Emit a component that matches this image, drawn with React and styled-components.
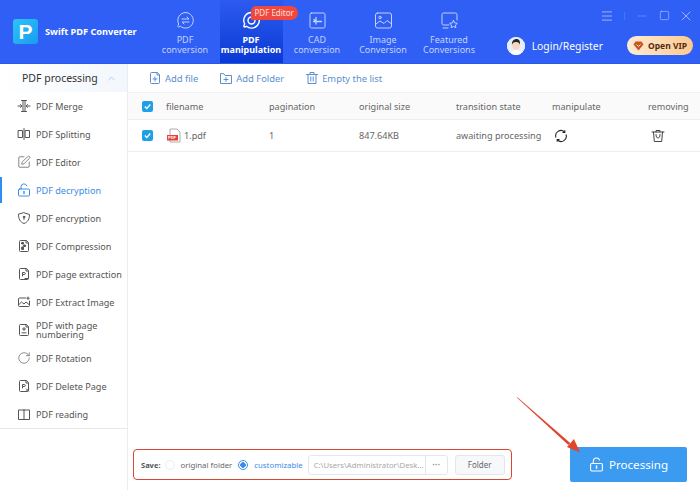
import styled, { createGlobalStyle } from "styled-components";
import { ChevronUp, SquarePen, RotateCw, Menu, Minus, Square, X } from "lucide-react";

const Global = createGlobalStyle`
  html, body { margin: 0; padding: 0; background: #fff; }
  body { font-family: "Noto Sans", "Noto Sans CJK SC", sans-serif; }
`;

const Page = styled.div`
  width: 700px;
  height: 490px;
  position: relative;
  overflow: hidden;
  display: flex;
  flex-direction: column;
  background: #fff;
`;

/* header */
const Header = styled.header`
  height: 63px;
  flex: none;
  display: flex;
  background: #2f5ff5;
  color: #fff;
  border-bottom: 1px solid #2a58e8;
  box-sizing: content-box;
`;
const Brand = styled.div`
  width: 151px;
  flex: none;
  display: flex;
  align-items: center;
  padding-left: 13px;
  box-sizing: border-box;
  gap: 7px;
  font-size: 9.2px;
  font-weight: 700;
  white-space: nowrap;
`;
const LogoBox = styled.div`
  width: 25px;
  height: 25px;
  border-radius: 3px;
  background: linear-gradient(135deg, #2cc4f5, #1a9cf0);
  display: flex;
  align-items: center;
  justify-content: center;
  font-family: "Liberation Sans", sans-serif;
  font-size: 21px;
  font-weight: 700;
  color: #fff;
`;
const Nav = styled.nav`
  display: flex;
  padding-left: 1px;
`;
const NavItem = styled.div`
  width: ${(p) => (p.$active ? "63px" : "66px")};
  margin: ${(p) => (p.$active ? "0 1.5px" : "0")};
  height: 63px;
  position: relative;
  display: flex;
  flex-direction: column;
  align-items: center;
  padding-top: 11px;
  box-sizing: border-box;
  color: ${(p) => (p.$active ? "#fff" : "#c4d3fd")};
  font-weight: ${(p) => (p.$active ? 700 : 400)};
  background: ${(p) => (p.$active ? "linear-gradient(#2d5bf0, #0a3ad4)" : "none")};
  font-size: 9px;
  line-height: 10px;
  text-align: center;
  white-space: nowrap;
  svg { flex: none; margin-bottom: 5px; }
`;
const Badge = styled.span`
  position: absolute;
  top: 6px;
  left: 31px;
  height: 14px;
  padding: 0 4px;
  border-radius: 5px 7px 7px 0;
  background: #f0473f;
  color: #ffe3dc;
  font-size: 8px;
  font-weight: 400;
  line-height: 14px;
  white-space: nowrap;
`;
const HeaderRight = styled.div`
  flex: 1;
  display: flex;
  flex-direction: column;
  align-items: flex-end;
  padding: 10px 3px 0 0;
`;
const WindowBar = styled.div`
  height: 11px;
  display: flex;
  align-items: center;
  color: #d6e0fd;
`;
const WinBtn = styled.span`
  width: 22px;
  height: 11px;
  display: flex;
  align-items: center;
  justify-content: center;
  color: ${(p) => (p.$dim ? "#8aa6f7" : "inherit")};
`;
const Sep = styled.i`
  width: 1px;
  height: 8px;
  margin: 0 6px;
  background: #4a74f2;
`;
const UserRow = styled.div`
  display: flex;
  align-items: center;
  margin: 15px 4px 0 0;
  gap: 7px;
`;
const Avatar = styled.div`
  width: 18px;
  height: 18px;
  border-radius: 50%;
  overflow: hidden;
  background: #e6f0fb;
`;
const Login = styled.span`
  font-size: 10.4px;
  margin-right: 17px;
  white-space: nowrap;
`;
const Vip = styled.div`
  width: 66px;
  height: 19px;
  border-radius: 10px;
  background: linear-gradient(90deg, #fdecd6, #fbc98f);
  color: #5a2a10;
  font-size: 8.5px;
  font-weight: 700;
  display: flex;
  align-items: center;
  justify-content: center;
  gap: 4px;
  white-space: nowrap;
`;

/* body */
const Body = styled.div`
  flex: 1;
  display: flex;
  min-height: 0;
`;
const Sidebar = styled.aside`
  width: 128px;
  flex: none;
  box-sizing: border-box;
  border-right: 1px solid #ececec;
`;
const SideHead = styled.div`
  height: 28px;
  display: flex;
  align-items: center;
  justify-content: space-between;
  padding: 0 10px 0 22px;
  background: linear-gradient(90deg, #fff, #f2f7fd);
  color: #333;
  font-size: 10.5px;
  svg { color: #7fb2ea; }
`;
const SideList = styled.div`
  border-bottom: 1px solid #e8e8e8;
  height: 336px;
`;
const SideItem = styled.div`
  height: 28px;
  display: flex;
  align-items: center;
  gap: 5px;
  padding-left: 17px;
  position: relative;
  color: ${(p) => (p.$active ? "#3d8be6" : "#555")};
  font-size: 9.1px;
  line-height: 9px;
  svg { flex: none; }
  &::before {
    content: "";
    display: ${(p) => (p.$active ? "block" : "none")};
    position: absolute;
    left: 0;
    top: 1px;
    width: 2px;
    height: 26px;
    background: #2f8ff0;
  }
`;

const Main = styled.main`
  flex: 1;
  min-width: 0;
  display: flex;
  flex-direction: column;
`;
const Toolbar = styled.div`
  height: 28px;
  flex: none;
  display: flex;
  align-items: center;
  padding-left: 20px;
  gap: 21px;
`;
const Tool = styled.div`
  display: flex;
  align-items: center;
  gap: 3px;
  color: #5b8fd0;
  font-size: 9.4px;
  white-space: nowrap;
`;
const Row = styled.div`
  height: ${(p) => (p.$head ? "28px" : "32px")};
  flex: none;
  display: grid;
  grid-template-columns: 38px 103px 90px 97px 96px 96px 52px;
  align-items: center;
  box-sizing: border-box;
  background: ${(p) => (p.$head ? "#fafafa" : "#fff")};
  border-top: ${(p) => (p.$head ? "1px solid #f1f1f1" : "none")};
  border-bottom: 1px solid #eeeeee;
  color: #666;
  font-size: 9.1px;
  white-space: nowrap;
`;
const Check = styled.span`
  width: 11px;
  height: 11px;
  margin-left: 14px;
  border-radius: 2px;
  background: #1ea0e6;
  display: flex;
  align-items: center;
  justify-content: center;
`;
const FileCell = styled.div`
  display: flex;
  align-items: center;
  gap: 2px;
`;
const PdfTag = styled.text`
  font-family: "Liberation Sans", sans-serif;
  font-size: 4px;
  font-weight: 700;
  fill: #fff;
`;
const Spacer = styled.div`
  flex: 1;
`;
const Footer = styled.div`
  flex: none;
  display: flex;
  align-items: flex-end;
  justify-content: space-between;
  padding: 0 13px 8px 5px;
`;
const SaveBox = styled.div`
  width: 379px;
  height: 31px;
  margin-bottom: 2px;
  box-sizing: border-box;
  border: 1px solid #d9472f;
  border-radius: 4px;
  display: flex;
  align-items: center;
  padding-left: 7px;
  font-size: 7.8px;
  color: #666;
  white-space: nowrap;
`;
const SaveLabel = styled.span`
  font-size: 7.5px;
  font-weight: 700;
  color: #555;
  margin-right: 4px;
`;
const Radio = styled.span`
  width: 10px;
  height: 10px;
  flex: none;
  border-radius: 50%;
  box-sizing: border-box;
  margin-right: 6px;
  border: 1px solid ${(p) => (p.$on ? "#3d8be6" : "#eee")};
  background: ${(p) => (p.$on ? "radial-gradient(circle, #3d8be6 0 2.5px, #fff 3px)" : "#fff")};
`;
const RadioText = styled.span`
  margin-right: ${(p) => (p.$on ? "5px" : "6px")};
  color: ${(p) => (p.$on ? "#3d8be6" : "#666")};
`;
const PathField = styled.div`
  width: 140px;
  height: 20px;
  flex: none;
  box-sizing: border-box;
  border: 1px solid #e3e6ec;
  border-radius: 3px;
  display: flex;
  align-items: center;
  color: #a8a8a8;
  font-size: 7.7px;
`;
const PathText = styled.span`
  flex: 1;
  padding-left: 5px;
  overflow: hidden;
`;
const Dots = styled.span`
  width: 21px;
  height: 100%;
  flex: none;
  border-left: 1px solid #e3e6ec;
  text-align: center;
  line-height: 17px;
  color: #888;
  font-size: 10px;
`;
const FolderBtn = styled.div`
  width: 50px;
  height: 20px;
  flex: none;
  margin-left: 7px;
  box-sizing: border-box;
  border: 1px solid #e4e6ea;
  border-radius: 3px;
  background: #f7f8fa;
  text-align: center;
  line-height: 18px;
  font-size: 8px;
  color: #666;
`;
const Process = styled.div`
  width: 117px;
  height: 35px;
  border-radius: 2px;
  background: #3b9bf0;
  color: #fff;
  font-size: 11.6px;
  display: flex;
  align-items: center;
  justify-content: center;
  gap: 5px;
`;
const ArrowLayer = styled.svg`
  position: absolute;
  left: 510px;
  top: 392px;
  pointer-events: none;
`;

const stroke = { fill: "none", stroke: "currentColor", strokeWidth: 1, strokeLinecap: "round", strokeLinejoin: "round" };

const Ico = ({ size = 14, w = 1, children }) => (
  <svg width={size} height={size} viewBox="0 0 14 14" {...stroke} strokeWidth={w}>{children}</svg>
);

const PageIco = ({ children }) => (
  <Ico>
    <path d="M9 1.500H3.500a1 1 0 0 0-1 1v9a1 1 0 0 0 1 1h7a1 1 0 0 0 1-1V4z" />
    <path d="M9 1.500V4h2.500" />
    {children}
  </Ico>
);

const UnlockIco = ({ size }) => (
  <Ico size={size}>
    <rect x="1.500" y="6" width="11" height="7" rx="1" />
    <path d="M4 6V3.800a3 3 0 0 1 5.800-1" />
    <path d="M7 8.500v2" strokeWidth="1.400" />
  </Ico>
);

const sideItems = [
  { label: "PDF Merge", icon: <Ico><path d="M6 1.500v11M8 1.500v11M1 7h3.500M3.500 5.500 5 7 3.500 8.500M13 7H9.500M10.500 5.500 9 7l1.500 1.500M4.500 1.500h5M4.500 12.500h5" /></Ico> },
  { label: "PDF Splitting", icon: <Ico><rect x="1.500" y="3.500" width="4" height="7" /><rect x="8.500" y="3.500" width="4" height="7" /><path d="M7 1.500v11" /></Ico> },
  { label: "PDF Editor", icon: <SquarePen size={14} strokeWidth={1.2} /> },
  { label: "PDF decryption", icon: <UnlockIco size={14} />, active: true },
  { label: "PDF encryption", icon: <Ico><path d="M7 1.800 12.500 3.500c0 4.500-1.500 7.500-5.500 9-4-1.500-5.500-4.500-5.500-9z" /><circle cx="7" cy="6" r=".8" fill="currentColor" /><path d="M7 6v2.500" /></Ico> },
  { label: "PDF Compression", icon: <PageIco><path d="M5 3.500h1.500v1.500H5zM7 6h1.500v1.500H7zM5 8h1.500v2.500H5z" fill="currentColor" /></PageIco> },
  { label: "PDF page extraction", icon: <PageIco><path d="M5.500 9V5.500h1.800a1 1 0 0 1 0 2H5.500M8 11.500h3" /></PageIco> },
  { label: "PDF Extract Image", icon: <Ico><path d="M8.500 3H2.500a1 1 0 0 0-1 1v6.500a1 1 0 0 0 1 1h9a1 1 0 0 0 1-1V6" /><path d="m2 9.500 2.500-2.500 2.500 2 2-2 3 2.500" /><path d="M11 2v2.500M9.800 3.200h2.500" /></Ico> },
  { label: "PDF with page numbering", icon: <PageIco><path d="M7 4.500v3M5.500 6h3M5 9.800h4" /></PageIco> },
  { label: "PDF Rotation", icon: <RotateCw size={14} strokeWidth={1.1} /> },
  { label: "PDF Delete Page", icon: <PageIco><path d="M5.500 9V5.500h1.800a1 1 0 0 1 0 2H5.500M9.500 10l2 2M11.500 10l-2 2" /></PageIco> },
  { label: "PDF reading", icon: <Ico><path d="M7 3v9.500M7 3H1.500v9.500H7M7 3h5.500v9.500H7" /></Ico> },
];

const CheckMark = () => (
  <Check>
    <svg width="9" height="9" viewBox="0 0 9 9"><path d="M1.800 4.500 3.800 6.500 7.300 2.500" fill="none" stroke="#fff" strokeWidth="1.300" /></svg>
  </Check>
);

export default function App() {
  return (
    <Page>
      <Global />
      <Header>
        <Brand>
          <LogoBox>P</LogoBox>
          Swift PDF Converter
        </Brand>
        <Nav>
          <NavItem>
            <svg width="19" height="19" viewBox="0 0 19 19" {...stroke}>
              <path d="M9.500 1.500a7.800 7.800 0 1 1-5 13.800l-2 .7a1 1 0 0 1-.5-1.500l.7-1.500A7.800 7.800 0 0 1 9.500 1.500z" />
              <path d="M6 8h7l-2-2M13 11H6l2 2" />
            </svg>
            PDF<br />conversion
          </NavItem>
          <NavItem $active>
            <svg width="19" height="19" viewBox="0 0 19 19" {...stroke} strokeWidth="1.400">
              <path d="M9.500 1.500a7.800 7.800 0 1 1-5 13.800l-2 .7a1 1 0 0 1-.5-1.500l.7-1.500A7.800 7.800 0 0 1 9.500 1.500z" />
              <path d="M13 9.500a3.500 3.500 0 1 1-3.500-3.500" />
            </svg>
            PDF<br />manipulation
            <Badge>PDF Editor</Badge>
          </NavItem>
          <NavItem>
            <svg width="19" height="19" viewBox="0 0 19 19" {...stroke}>
              <rect x="2" y="2" width="15" height="15" rx="1.500" />
              <path d="M5.500 10.500h8M8 13V6.500M8 10.500 6 8.500" strokeWidth="1.300" />
            </svg>
            CAD<br />conversion
          </NavItem>
          <NavItem>
            <svg width="19" height="19" viewBox="0 0 19 19" {...stroke}>
              <rect x="1.500" y="2" width="16" height="15" rx="2" />
              <circle cx="6" cy="6.500" r="1.300" />
              <path d="m2 13 4-3 4 2.500 3-3 4 3" />
            </svg>
            Image<br />Conversion
          </NavItem>
          <NavItem>
            <svg width="19" height="19" viewBox="0 0 19 19" {...stroke}>
              <path d="M9 14H3.500a1.500 1.500 0 0 1-1.500-1.500v-9A1.500 1.500 0 0 1 3.500 2h12A1.500 1.500 0 0 1 17 3.500V9" />
              <path d="M3 17h5" />
              <path d="m13.500 9.500 1.200 2.400 2.600.4-1.900 1.800.5 2.600-2.400-1.200-2.400 1.200.5-2.600-1.900-1.800 2.600-.4z" />
            </svg>
            Featured<br />Conversions
          </NavItem>
        </Nav>
        <HeaderRight>
          <WindowBar>
            <WinBtn><Menu size={14} strokeWidth={1.1} /></WinBtn>
            <Sep />
            <WinBtn $dim><Minus size={14} strokeWidth={1} /></WinBtn>
            <WinBtn><Square size={11} strokeWidth={1.1} /></WinBtn>
            <WinBtn><X size={16} strokeWidth={1} /></WinBtn>
          </WindowBar>
          <UserRow>
            <Avatar>
              <svg width="18" height="18" viewBox="0 0 18 18">
                <rect width="18" height="18" fill="#e6f0fb" />
                <path d="M3.500 18c.5-3.500 3-5 5.500-5s5 1.500 5.500 5z" fill="#fff" />
                <ellipse cx="9" cy="8.500" rx="3.600" ry="4.300" fill="#f7d7c0" />
                <path d="M5 8c-.5-4 2-6 4.500-6S13.500 4 13 8c-.5-2-1.500-3-4-3S5.500 6 5 8z" fill="#26262e" />
              </svg>
            </Avatar>
            <Login>Login/Register</Login>
            <Vip>
              <svg width="11" height="10" viewBox="0 0 11 10">
                <path d="M2.500.5h6l2 3-5 6-5-6z" fill="#c9561f" />
                <path d="m3.500 3.500 2 2 2-2" fill="none" stroke="#fde6c8" />
              </svg>
              Open VIP
            </Vip>
          </UserRow>
        </HeaderRight>
      </Header>
      <Body>
        <Sidebar>
          <SideHead>
            PDF processing
            <ChevronUp size={11} strokeWidth={1.3} />
          </SideHead>
          <SideList>
            {sideItems.map((item) => (
              <SideItem key={item.label} $active={item.active}>
                {item.icon}
                <span>{item.label}</span>
              </SideItem>
            ))}
          </SideList>
        </Sidebar>
        <Main>
          <Toolbar>
            <Tool>
              <PageIco><path d="M7 6v4M5 8h4" /></PageIco>
              Add file
            </Tool>
            <Tool>
              <Ico><path d="M1.500 3V12.500h11V4.500H6L5 3z" /><path d="M7 6.500v4M5 8.500h4" /></Ico>
              Add Folder
            </Tool>
            <Tool>
              <Ico><path d="M1.500 3.500h11M5 3.500V1.500h4v2M3 3.500v9h8v-9M5.800 6v4M8.200 6v4" /></Ico>
              Empty the list
            </Tool>
          </Toolbar>
          <Row $head>
            <CheckMark />
            <span>filename</span>
            <span>pagination</span>
            <span>original size</span>
            <span>transition state</span>
            <span>manipulate</span>
            <span>removing</span>
          </Row>
          <Row>
            <CheckMark />
            <FileCell>
              <svg width="16" height="15" viewBox="0 0 16 15">
                <path d="M4 1h7l3 3v10H4z" fill="#fff" stroke="#999" strokeWidth=".8" />
                <rect x="1" y="7" width="11" height="5.500" fill="#e5433a" />
                <PdfTag x="2" y="11.300">PDF</PdfTag>
              </svg>
              1.pdf
            </FileCell>
            <span>1</span>
            <span>847.64KB</span>
            <span>awaiting processing</span>
            <svg width="14" height="14" viewBox="0 0 14 14" style={{ marginLeft: 2 }} fill="none" stroke="#222" strokeWidth="1.100">
              <path d="M2 8.500A5.200 5.200 0 0 1 10.500 3M12 5.500A5.200 5.200 0 0 1 3.500 11" />
              <path d="M10.800 1.200v2.300H8.500M3.200 12.800v-2.300h2.300" />
            </svg>
            <svg width="14" height="14" viewBox="0 0 14 14" style={{ marginLeft: 3 }} {...stroke} stroke="#444">
              <path d="M1 3h12M5 3V1.500h4V3M2.500 3l.8 9.500h7.400L11.500 3M5 5.500c0 2.500.8 3.500 2 3.500s2-1 2-3.500" />
            </svg>
          </Row>
          <Spacer />
          <Footer>
            <SaveBox>
              <SaveLabel>Save:</SaveLabel>
              <Radio />
              <RadioText>original folder</RadioText>
              <Radio $on />
              <RadioText $on>customizable</RadioText>
              <PathField>
                <PathText>C:\Users\Administrator\Desk...</PathText>
                <Dots>···</Dots>
              </PathField>
              <FolderBtn>Folder</FolderBtn>
            </SaveBox>
            <Process>
              <UnlockIco size={15} />
              Processing
            </Process>
          </Footer>
        </Main>
      </Body>
      <ArrowLayer width="90" height="80" viewBox="0 0 90 80">
        <path d="M7 5.700 7.400 5.300 60.200 51 58.400 53z" fill="#e0452c" />
        <path d="M70 60.500 57 55 64 47z" fill="#e0452c" />
      </ArrowLayer>
    </Page>
  );
}
